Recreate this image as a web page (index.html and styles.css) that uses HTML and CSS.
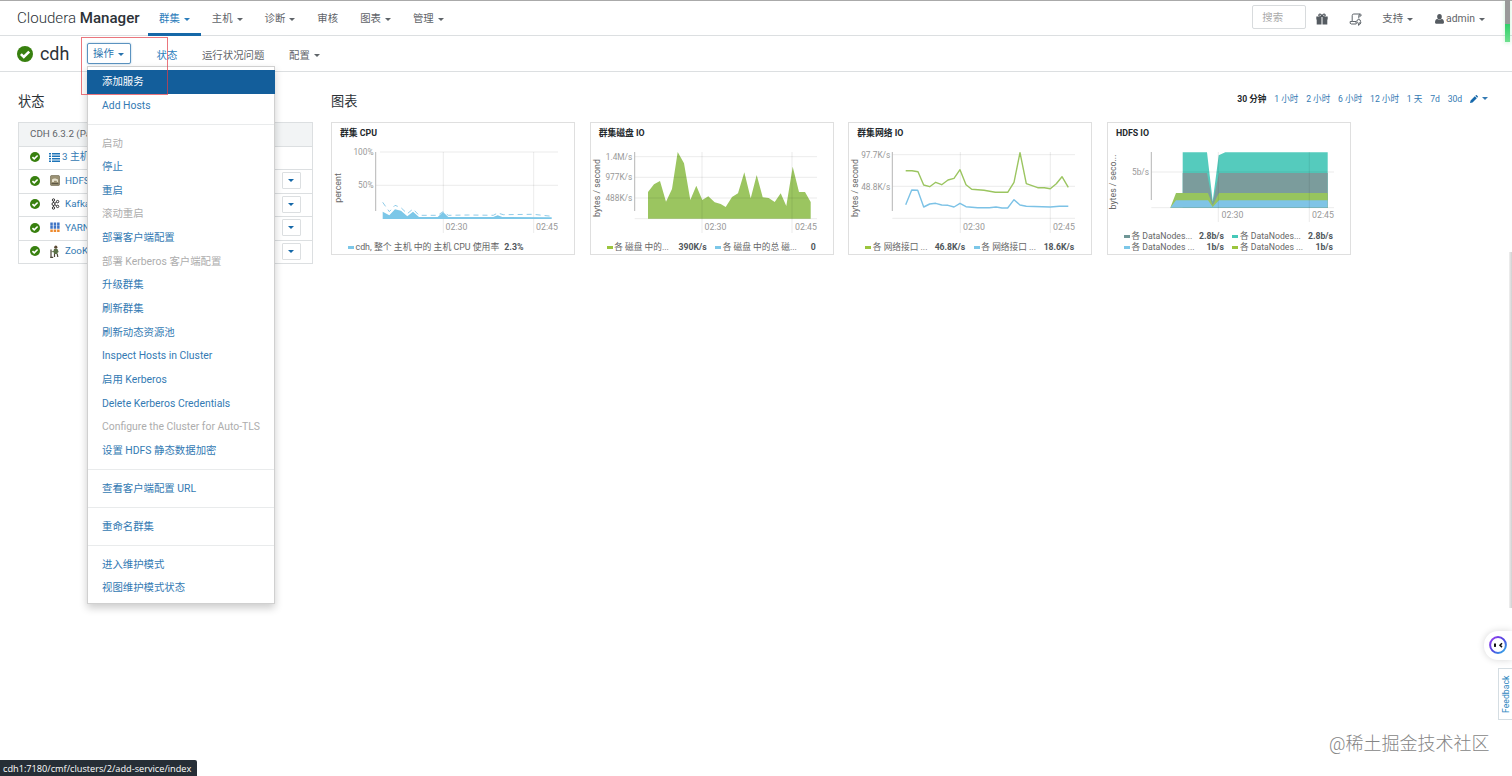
FILE: index.html
```html
<!DOCTYPE html>
<html lang="zh-CN">

<head>
    <meta charset="utf-8">
    <title>cdh - Cloudera Manager</title>
    <link rel="stylesheet" href="styles.css">
</head>

<body>
    <svg class="defs" width="0" height="0">
        <symbol id="check" viewBox="0 0 16 16">
            <circle cx="8" cy="8" r="8" fill="#38800f" />
            <path d="M3.9 8.1l2.9 2.9 5.4-5.4" fill="none" stroke="#fff" stroke-width="2.6" />
        </symbol>
    </svg>

    <header class="topbar">
        <a class="brand">Cloudera <b>Manager</b></a>
        <nav class="nav">
            <a class="nav-item active">群集<i class="caret"></i></a>
            <a class="nav-item">主机<i class="caret"></i></a>
            <a class="nav-item">诊断<i class="caret"></i></a>
            <a class="nav-item">审核</a>
            <a class="nav-item">图表<i class="caret"></i></a>
            <a class="nav-item">管理<i class="caret"></i></a>
        </nav>
        <div class="tools">
            <input class="search" type="text" placeholder="搜索">
            <svg class="gift" width="12" height="12" viewBox="0 0 12 12" fill="#555b61">
                <path d="M.3 3.6h5.2v3H.3zM6.500 3.600h5.200v3H6.500zM.700 6.600h4.800v4.800H.700zM6.500 6.600h4.800v4.800H6.500z" />
                <path d="M6 3.400C3.200 3.600 2.300 2.400 3 1.500S5.500 1.300 6 3.400C6.500 1.300 8.300.6 9 1.500S8.800 3.600 6 3.400z" fill="none" stroke="#555b61" stroke-width="1.200" />
            </svg>
            <svg class="scroll" width="13" height="13" viewBox="0 0 13 13" fill="none" stroke="#5f656b" stroke-width="1">
                <path d="M3.200 8.500V2.600Q3.200 1 4.800 1H11.300Q9.800 1.200 9.800 2.800V5.500M11.300 1Q12.300 1.400 12 3H10M3.200 8.500H1.200Q.5 10.800 2.300 11H7.200M3.200 8.500H7Q6.600 10.600 7.800 11" />
                <circle cx="9.700" cy="8.400" r="1.900" />
                <path d="M12 9.300q-.3 2.400-2.900 2.400M10.200 10.600l-1.200 1.100 1.200 1" />
            </svg>
            <a class="tool">支持<i class="caret"></i></a>
            <a class="tool user">
                <svg width="9" height="10" viewBox="0 0 9 10" fill="#555b61">
                    <ellipse cx="4.500" cy="2.700" rx="2.300" ry="2.700" />
                    <path d="M0 8.600Q0 5.300 2.300 5q2.200 1.300 4.400 0Q9 5.300 9 8.600 9 9.700 8 9.700H1Q0 9.700 0 8.600z" />
                </svg>
                admin<i class="caret"></i>
            </a>
        </div>
    </header>

    <section class="subbar">
        <svg class="status-lg" width="16" height="16"><use href="#check" /></svg>
        <h1>cdh</h1>
        <div class="dropdown">
            <button class="btn-actions">操作<i class="caret"></i></button>
            <ul class="menu">
                <li class="selected">添加服务</li>
                <li>Add Hosts</li>
                <li class="divider"></li>
                <li class="disabled">启动</li>
                <li>停止</li>
                <li>重启</li>
                <li class="disabled">滚动重启</li>
                <li>部署客户端配置</li>
                <li class="disabled">部署 Kerberos 客户端配置</li>
                <li>升级群集</li>
                <li>刷新群集</li>
                <li>刷新动态资源池</li>
                <li>Inspect Hosts in Cluster</li>
                <li>启用 Kerberos</li>
                <li>Delete Kerberos Credentials</li>
                <li class="disabled">Configure the Cluster for Auto-TLS</li>
                <li>设置 HDFS 静态数据加密</li>
                <li class="divider"></li>
                <li>查看客户端配置 URL</li>
                <li class="divider"></li>
                <li>重命名群集</li>
                <li class="divider"></li>
                <li>进入维护模式</li>
                <li>视图维护模式状态</li>
            </ul>
            <div class="highlight"></div>
        </div>
        <nav class="tabs">
            <a class="current">状态</a>
            <a>运行状况问题</a>
            <a>配置<i class="caret"></i></a>
        </nav>
    </section>

    <main class="content">
        <aside class="services">
            <h2>状态</h2>
            <div class="panel">
                <div class="panel-head">CDH 6.3.2 (Parcel)</div>
                <div class="service">
                    <svg class="ok" width="10" height="10"><use href="#check" /></svg>
                    <svg class="list" width="11" height="9" viewBox="0 0 11 9" fill="#1d74b8">
                        <path d="M0 0h2v1.500H0zM3 0h8v1.500H3zM0 2.500h2V4H0zM3 2.500h8V4H3zM0 5h2v1.500H0zM3 5h8v1.500H3zM0 7.500h2V9H0zM3 7.500h8V9H3z" />
                    </svg>
                    <a class="hosts">3 主机</a>
                </div>
                <div class="service">
                    <svg class="ok" width="10" height="10"><use href="#check" /></svg>
                    <svg class="icon" width="10" height="11" viewBox="0 0 10 11">
                        <rect x=".4" y=".4" width="9.200" height="10.200" rx="1.500" fill="#9a9174" stroke="#7b745c" stroke-width=".8" />
                        <path d="M2 7V4.500Q3.500 3 5.500 3.600L8 4.500V7H6.800V5.800H4V7z" fill="#e8e3cf" />
                        <path d="M1.500 8.700h7" stroke="#4f4a3b" />
                    </svg>
                    <a>HDFS</a>
                    <button class="btn-more"><i class="caret"></i></button>
                </div>
                <div class="service">
                    <svg class="ok" width="10" height="10"><use href="#check" /></svg>
                    <svg class="icon" width="10" height="12" viewBox="0 0 10 12" fill="none" stroke="#333" stroke-width="1">
                        <path d="M3.500 3.200v1.500M3.500 7.300v1.500M4.900 5.200l1.600-1M4.900 6.800l1.600 1" />
                        <circle cx="3.500" cy="2" r="1.200" />
                        <circle cx="3.500" cy="6" r="1.500" />
                        <circle cx="3.500" cy="10" r="1.200" />
                        <circle cx="7.600" cy="3.600" r="1.200" />
                        <circle cx="7.600" cy="8.400" r="1.200" />
                    </svg>
                    <a>Kafka</a>
                    <button class="btn-more"><i class="caret"></i></button>
                </div>
                <div class="service">
                    <svg class="ok" width="10" height="10"><use href="#check" /></svg>
                    <svg class="icon" width="10" height="11" viewBox="0 0 10 11">
                        <path d="M.3.500h2.500v2.900H.3zM3.700.500h2.500v2.900H3.700zM7.100.500h2.500v2.900H7.100zM.3 3.800h2.500v2.900H.3zM3.700 3.800h2.500v2.900H3.700zM7.100 3.800h2.500v2.900H7.100z" fill="#3f74c4" />
                        <path d="M.3 7.400h2.500V10H.3zM3.700 7.400h2.500V10H3.700zM7.100 7.400h2.500V10H7.100z" fill="#ee8a2d" />
                    </svg>
                    <a>YARN</a>
                    <button class="btn-more"><i class="caret"></i></button>
                </div>
                <div class="service">
                    <svg class="ok" width="10" height="10"><use href="#check" /></svg>
                    <svg class="icon" width="10" height="13" viewBox="0 0 10 13">
                        <circle cx="5.800" cy="2.200" r="1.600" fill="#5b4a34" />
                        <path d="M4 4h3.500l1.200 3-1 .4-.3 1.600H4L3.500 7l-2 .3L1.300 6.400 3.500 6z" fill="#5c7148" />
                        <path d="M4.500 9v3M7.200 9l.6 3M1 4.500v8M.2 12.300h3" stroke="#4d4638" stroke-width="1.200" fill="none" />
                    </svg>
                    <a>ZooKeeper</a>
                    <button class="btn-more"><i class="caret"></i></button>
                </div>
            </div>
        </aside>

        <section class="charts">
            <div class="charts-head">
                <h2>图表</h2>
                <div class="ranges">
                    <b>30 分钟</b>
                    <a>1 小时</a>
                    <a>2 小时</a>
                    <a>6 小时</a>
                    <a>12 小时</a>
                    <a>1 天</a>
                    <a>7d</a>
                    <a>30d</a>
                    <a class="edit">
                        <svg width="8" height="8" viewBox="0 0 8 8" fill="#1568ab"><path d="M0 8l.6-2.500L4.800 1.300l2 2L2.500 7.400zM5.300.8L6 .2q.4-.3.8 0l1 1q.3.400 0 .8l-.600.700z" /></svg>
                        <i class="caret"></i>
                    </a>
                </div>
            </div>
            <div class="cards">
                <article class="card">
                    <h3>群集 CPU</h3>
                    <svg class="plot" width="244" height="100" viewBox="0 20 244 100">
                        <path class="grid" d="M49 30H227M44.700 63.300H227M112.300 30V111M202.700 30V111" />
                        <path class="axis" d="M44.700 30V89" />
                        <polygon fill="#7cc7e8" points="51.700,97 51.700,89.700 58.300,93.300 64,87.300 70,88.700 76.300,94.300 82,89.700 88,95 106.700,95 112,90 117.300,95 162.300,95 166.700,93.300 171.300,95 220.700,95.300 220.700,97" />
                        <polyline class="dashed" points="51.700,80.300 58.300,89.700 64,83.300 70,85.700 76.300,91.700 82,87 88,93.300 106.700,93.300 112,89.700 117.300,93.300 137.300,93 162.300,93.300 166.700,91 172.300,92.700 202.300,92.300 220.700,94.300" />
                        <text class="y" x="42.500" y="33">100%</text>
                        <text class="y" x="42.500" y="66">50%</text>
                        <text class="x" x="114.500" y="107.500">02:30</text>
                        <text class="x" x="205" y="107.500">02:45</text>
                        <text class="unit" transform="translate(10 66) rotate(-90)">percent</text>
                    </svg>
                    <div class="legend single">
                        <div class="key blue"><span>cdh, 整个 主机 中的 主机 CPU 使用率</span><b>2.3%</b></div>
                    </div>
                </article>

                <article class="card">
                    <h3>群集磁盘 IO</h3>
                    <svg class="plot" width="244" height="100" viewBox="0 20 244 100">
                        <polygon fill="#9bc560" points="58,96.700 58,70 64,62.300 70,59 76,79.700 82,67 87.700,30 94,41.300 100.300,78 106.300,63.700 112.300,78 118.300,74.300 124.700,80.300 130.700,82 135.700,85 142,75 148,71.300 154.300,50.300 160.700,76.300 166.700,53 172.700,75.300 178.700,76 184.700,80 190.700,71.300 196.300,84 202.700,44.700 209,70 215,70 220.700,80 220.700,96.700" />
                        <path class="grid" d="M44.700 34.700H227M44.700 55.300H227M44.700 76H227M44.700 96.700H227M112 30V111M202 30V111" />
                        <path class="axis" d="M44.700 30V89" />
                        <text class="y" x="42.300" y="37.500">1.4M/s</text>
                        <text class="y" x="42.300" y="58.200">977K/s</text>
                        <text class="y" x="42.300" y="79">488K/s</text>
                        <text class="x" x="114.500" y="107.500">02:30</text>
                        <text class="x" x="205" y="107.500">02:45</text>
                        <text class="unit" transform="translate(9.500 66) rotate(-90)">bytes / second</text>
                    </svg>
                    <div class="legend">
                        <div class="key green"><span>各 磁盘 中的...</span><b>390K/s</b></div>
                        <div class="key blue"><span>各 磁盘 中的总 磁...</span><b>0</b></div>
                    </div>
                </article>

                <article class="card">
                    <h3>群集网络 IO</h3>
                    <svg class="plot" width="244" height="100" viewBox="0 20 244 100">
                        <path class="grid" d="M44.300 32.700H227M44.300 64.300H227M44.300 96.300H227M112.300 30V111M202.300 30V111" />
                        <path class="axis" d="M44.300 30V89" />
                        <polyline class="line" stroke="#9bc560" points="57.700,48.700 64,48.700 70,49.700 75.700,63 81.700,64.700 87.700,60.300 93.700,62.700 100,58 106,56.300 112,47.700 118,62.700 123.700,67.300 136,68.300 147.300,70.300 159.700,70.300 166,60.300 172,30.700 178.300,61.700 189.700,65.700 196.300,65.700 202.300,66.700 208.300,61.700 214,54.700 220.300,65.300" />
                        <polyline class="line" stroke="#7cc2e6" points="57.700,82.700 63.700,68 69.700,68.300 75.700,85 81.700,82 87.700,81.300 93.700,83 100,83.300 106,85 112,81.300 118,84.700 129.700,85.700 141.300,85.700 148,85 154,86 159.700,86 166,77.700 172,83 178.300,84.300 202.300,85 211.300,84.300 220.300,84.300" />
                        <text class="y" x="42.300" y="35.700">97.7K/s</text>
                        <text class="y" x="42.300" y="67.500">48.8K/s</text>
                        <text class="x" x="115" y="107.500">02:30</text>
                        <text class="x" x="205" y="107.500">02:45</text>
                        <text class="unit" transform="translate(10 66) rotate(-90)">bytes / second</text>
                    </svg>
                    <div class="legend">
                        <div class="key green"><span>各 网络接口 ...</span><b>46.8K/s</b></div>
                        <div class="key blue"><span>各 网络接口 ...</span><b>18.6K/s</b></div>
                    </div>
                </article>

                <article class="card">
                    <h3>HDFS IO</h3>
                    <svg class="plot" width="244" height="89" viewBox="0 20 244 89">
                        <polygon fill="#55cbbd" points="75.700,85.700 75.700,30.300 100,30.300 105.700,79 111.700,33.300 118.300,30.300 220.700,30.300 220.700,85.700" />
                        <polygon fill="#7b9c9c" points="75.700,85.700 75.700,51 100,51 105.700,81 112,51 220.700,51 220.700,85.700" />
                        <polygon fill="#97c45e" points="63.300,85.700 69,71 101,71 105.700,83.300 112,71 220.700,71 220.700,85.700" />
                        <polygon fill="#7fc4e6" points="63.300,85.700 69,78.300 101,78.300 105.700,85 112,78.300 220.700,78.300 220.700,85.700" />
                        <path class="grid" d="M44.300 50H227M44.300 85.700H227M111.300 30V100M202.300 30V100" />
                        <path class="axis" d="M44.300 30V78" />
                        <text class="y" x="42" y="53">5b/s</text>
                        <text class="x" x="114.500" y="96.300">02:30</text>
                        <text class="x" x="205" y="96.300">02:45</text>
                        <text class="unit" transform="translate(9 60) rotate(-90)">bytes / seco...</text>
                    </svg>
                    <div class="legend">
                        <div class="key slate"><span>各 DataNodes...</span><b>2.8b/s</b></div>
                        <div class="key teal"><span>各 DataNodes...</span><b>2.8b/s</b></div>
                        <div class="key blue"><span>各 DataNodes ...</span><b>1b/s</b></div>
                        <div class="key green"><span>各 DataNodes ...</span><b>1b/s</b></div>
                    </div>
                </article>
            </div>
        </section>
    </main>

    <div class="load-bar"></div>
    <div class="side-shadow"></div>
    <div class="assistant">
        <svg width="18" height="18" viewBox="0 0 18 18">
            <defs>
                <linearGradient id="ring" x1="0" y1="0" x2="1" y2="1">
                    <stop offset="0" stop-color="#9a3df0" />
                    <stop offset=".5" stop-color="#4f45e0" />
                    <stop offset="1" stop-color="#2fb6e8" />
                </linearGradient>
            </defs>
            <circle cx="9" cy="9" r="7.900" fill="#fff" stroke="url(#ring)" stroke-width="2" />
            <rect x="5" y="7.500" width="2" height="3.400" fill="#111" />
            <path d="M13 7.300l-2 1.900 2 1.900" fill="none" stroke="#111" stroke-width="1.500" />
        </svg>
    </div>
    <div class="feedback">Feedback</div>
    <div class="watermark">@稀土掘金技术社区</div>
    <div class="statusbar">cdh1:7180/cmf/clusters/2/add-service/index</div>
</body>

</html>
```
FILE: styles.css
```css
* {
    box-sizing: border-box;
}

body {
    margin: 0;
    height: 776px;
    overflow: hidden;
    position: relative;
    background: #fff;
    color: #5f6469;
    font-family: Roboto, "Noto Sans CJK SC", sans-serif;
    font-size: 10.4px;
    line-height: 16px;
}

h1,
h2,
h3,
ul {
    margin: 0;
    padding: 0;
    font-weight: 400;
}

button,
input {
    font: inherit;
    margin: 0;
}

svg {
    flex: none;
}

.defs {
    position: absolute;
}

.caret {
    display: inline-block;
    flex: none;
    margin-left: 4px;
    border: 3px solid transparent;
    border-top-color: currentColor;
    border-bottom: 0;
}

/* top navigation */
.topbar {
    display: flex;
    height: 36px;
    padding: 0 27px 0 17px;
    border-top: 1px solid #aaa;
    border-bottom: 1px solid #dcdfe1;
}

.brand {
    width: 131px;
    color: #2c3237;
    font-size: 15.1px;
    font-weight: 300;
    line-height: 35px;
    white-space: nowrap;
}

.brand b {
    font-weight: 500;
}

.nav {
    display: flex;
}

.nav-item {
    display: flex;
    align-items: center;
    padding: 2px 11px 0;
}

.nav-item.active {
    height: 35px;
    color: #2b7dbb;
    border-bottom: 3px solid #1568a8;
    padding-top: 4px;
}

.tools {
    display: flex;
    align-items: center;
    margin-left: auto;
}

.search {
    width: 54px;
    height: 24px;
    padding: 0 9px;
    border: 1px solid #d8dbdd;
    border-radius: 2px;
    margin-top: -2px;
}

.search::placeholder {
    color: #aaa;
}

.gift {
    margin: 2px 0 0 10px;
}

.scroll {
    margin: 2px 20px 0 21px;
}

.tool {
    display: flex;
    align-items: center;
    padding-top: 2px;
}

.user {
    margin-left: 22px;
}

.user svg {
    margin-right: 2px;
}

/* cluster bar */
.subbar {
    display: flex;
    align-items: center;
    height: 36px;
    padding-left: 17px;
    border-bottom: 1px solid #dcdfe1;
}

.subbar h1 {
    width: 29px;
    margin: 0 17.5px 0 7px;
    color: #2c3237;
    font-size: 17.9px;
}

.dropdown {
    position: relative;
}

.btn-actions {
    display: flex;
    align-items: center;
    justify-content: center;
    width: 44px;
    height: 21px;
    padding: 1px 0 0;
    background: #fff;
    border: 1px solid #5b93c0;
    border-radius: 2px;
    box-shadow: 0 0 2px #9fc0da;
    color: #2873ae;
}

.menu {
    position: absolute;
    z-index: 5;
    top: 23px;
    left: .5px;
    width: 188px;
    padding: 3px 0;
    list-style: none;
    background: #fff;
    border: 1px solid #d0d0d0;
    box-shadow: 0 4px 8px rgba(0, 0, 0, .2);
}

.menu li {
    height: 23.67px;
    padding: 0 14px;
    color: #337ab3;
    line-height: 24.4px;
    white-space: nowrap;
}

.menu .selected {
    margin: 0 -1px;
    padding-left: 15px;
    background: #135e9b;
    color: #fff;
}

.menu .disabled {
    color: #adadad;
}

.menu .divider {
    height: 1px;
    margin: 6.6px 0;
    background: #e9ebec;
}

.highlight {
    position: absolute;
    z-index: 6;
    top: -6px;
    left: -6px;
    width: 87px;
    height: 58px;
    border: 1px solid rgba(225, 60, 70, .7);
}

.tabs {
    display: flex;
    gap: 24.7px;
    margin: 4px 0 0 26px;
}

.tabs a {
    display: flex;
    align-items: center;
}

.tabs .current {
    color: #2b7dbb;
}

/* services */
.content {
    display: flex;
    gap: 18px;
    padding: 20px 18px;
}

h2 {
    height: 30px;
    color: #2c3237;
    font-size: 13.2px;
    line-height: 19px;
}

.services {
    width: 295px;
}

.panel {
    border: 1px solid #dcdfe1;
}

.panel-head {
    height: 22.5px;
    padding-left: 11px;
    background: #f2f4f5;
    font-size: 9.8px;
    line-height: 22px;
}

.service {
    display: flex;
    align-items: center;
    height: 23.5px;
    padding: 0 11.5px 1px 11px;
    border-top: 1px solid #dcdfe1;
    color: #337ab3;
    font-size: 9.8px;
}

.service .list {
    margin: 0 2px 0 9px;
}

.service .icon {
    margin: 0 5px 0 10px;
}

.btn-more {
    display: flex;
    align-items: center;
    justify-content: center;
    width: 19px;
    height: 17px;
    margin-left: auto;
    padding: 0;
    background: #fff;
    border: 1px solid #dcdfe1;
    border-radius: 1px;
    color: #1568a8;
}

.btn-more .caret {
    margin: 0;
}

/* charts */
.charts {
    flex: 1;
}

.charts-head {
    display: flex;
    justify-content: space-between;
}

.ranges {
    display: flex;
    gap: 7.8px;
    margin: -1px 6px 0 0;
    color: #337ab3;
    font-size: 8.6px;
}

.ranges b {
    color: #24292d;
}

.edit {
    display: flex;
    align-items: center;
    height: 15px;
}

.cards {
    display: flex;
    gap: 14.67px;
}

.card {
    width: 244px;
    height: 133px;
    border: 1px solid #dfdfdf;
}

.card h3 {
    height: 19px;
    padding: 1px 0 0 8px;
    color: #24292d;
    font-size: 8.8px;
    font-weight: 700;
    line-height: 18px;
}

.plot {
    display: block;
    margin: 0 -1px;
}

.grid {
    fill: none;
    stroke: rgba(0, 0, 0, .08);
}

.axis {
    fill: none;
    stroke: #b5b5b5;
}

.dashed {
    fill: none;
    stroke: #8fcbe8;
    stroke-dasharray: 5 4;
}

.line {
    fill: none;
    stroke-width: 1.4;
    stroke-linejoin: round;
}

.plot text {
    fill: #999;
    font-size: 8.3px;
}

.plot .y {
    text-anchor: end;
}

.plot .x {
    font-size: 8.8px;
}

.plot .unit {
    fill: #666;
    font-size: 8.8px;
    text-anchor: middle;
}

.legend {
    display: grid;
    grid-template-columns: 100px 100.5px;
    gap: 0 8.5px;
    padding-left: 16px;
    color: #666;
    font-size: 8.7px;
    line-height: 11.3px;
    white-space: nowrap;
}

.legend.single {
    grid-template-columns: max-content;
    font-size: 8.85px;
}

.key {
    display: flex;
    align-items: center;
    height: 11.3px;
}

.key::before {
    content: "";
    width: 6px;
    height: 3px;
    margin-right: 1.5px;
    background: currentColor;
}

.key span {
    color: #666;
}

.key b {
    margin-left: auto;
    color: #50565b;
}

.single b {
    margin-left: 5px;
}

.blue {
    color: #7cc7e8;
}

.green {
    color: #9bc53d;
}

.slate {
    color: #6f9696;
}

.teal {
    color: #45c8b8;
}

/* things floating over the page */
.load-bar {
    position: absolute;
    top: 0;
    left: 1505px;
    width: 5px;
    height: 42px;
    background: linear-gradient(#999 24px, #2fcf68 24px, #6fe08f);
    box-shadow: 0 1px 4px rgba(80, 210, 120, .3);
}

.side-shadow {
    position: absolute;
    top: 252px;
    right: 0;
    width: 3px;
    height: 356px;
    background: linear-gradient(to right, #f0f0f0, #d0d0d0);
}

.assistant {
    position: absolute;
    top: 631px;
    right: 0;
    width: 28px;
    height: 29px;
    padding: 5px;
    border-radius: 14px 0 0 14px;
    background: #fff;
    box-shadow: 0 0 7px rgba(0, 0, 0, .16);
}

.feedback {
    position: absolute;
    top: 668px;
    right: -1px;
    width: 15px;
    height: 52px;
    border: 1px solid #d5dde2;
    color: #2c86c0;
    font-size: 8.7px;
    line-height: 14px;
    text-align: center;
    writing-mode: vertical-rl;
    transform: rotate(180deg);
}

.watermark {
    position: absolute;
    top: 732px;
    left: 1329px;
    color: #858585;
    font-size: 18px;
    font-weight: 300;
    line-height: 24px;
    white-space: nowrap;
}

.statusbar {
    position: absolute;
    left: 0;
    bottom: 0;
    width: 197px;
    height: 16px;
    padding-left: 3px;
    border-radius: 0 2px 0 0;
    background: #262e36;
    color: #fff;
    font-family: "Open Sans", sans-serif;
    font-size: 9.2px;
    line-height: 17px;
    white-space: nowrap;
}
```
